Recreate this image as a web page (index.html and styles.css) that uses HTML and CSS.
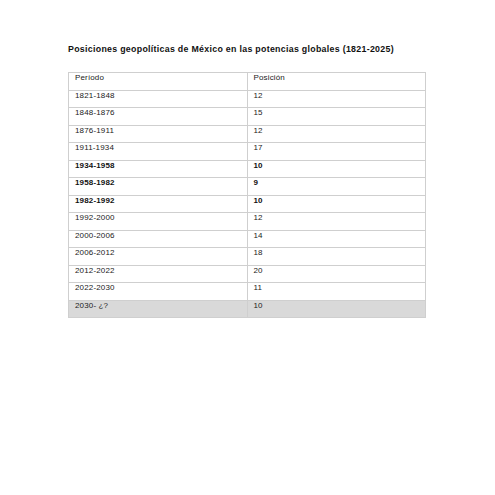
FILE: index.html
```html
<!DOCTYPE html>
<html lang="es">
<head>
<meta charset="utf-8">
<link rel="stylesheet" href="styles.css">
</head>
<body>
<div class="page">
  <h1 class="title">Posiciones geopolíticas de México en las potencias globales (1821-2025)</h1>
  <table class="data">
    <tr><td>Período</td><td>Posición</td></tr>
    <tr><td>1821-1848</td><td>12</td></tr>
    <tr><td>1848-1876</td><td>15</td></tr>
    <tr><td>1876-1911</td><td>12</td></tr>
    <tr><td>1911-1934</td><td>17</td></tr>
    <tr class="bold"><td>1934-1958</td><td>10</td></tr>
    <tr class="bold"><td>1958-1982</td><td>9</td></tr>
    <tr class="bold"><td>1982-1992</td><td>10</td></tr>
    <tr><td>1992-2000</td><td>12</td></tr>
    <tr><td>2000-2006</td><td>14</td></tr>
    <tr><td>2006-2012</td><td>18</td></tr>
    <tr><td>2012-2022</td><td>20</td></tr>
    <tr><td>2022-2030</td><td>11</td></tr>
    <tr class="shade"><td>2030- ¿?</td><td>10</td></tr>
  </table>
</div>
</body>
</html>
```

FILE: styles.css
```css
html, body {
  margin: 0;
  padding: 0;
  background: #ffffff;
}
.page {
  padding: 43px 0 0 68px;
  font-family: "Liberation Sans", Arial, sans-serif;
  color: #1a1a1a;
}
.title {
  margin: 0;
  font-size: 8.8px;
  font-weight: bold;
  letter-spacing: 0.3px;
  line-height: 12px;
  color: #111;
}
.data {
  margin-top: 17px;
  border-collapse: collapse;
  width: 358px;
  table-layout: fixed;
  font-size: 8px;
}
.data td {
  border: 1px solid #cfcfcf;
  height: 16.5px;
  padding: 0 0 0 6px;
  vertical-align: top;
  line-height: 10px;
  letter-spacing: 0.15px;
  color: #222;
}
.data tr.bold td {
  font-weight: bold;
  color: #111;
}
.data tr.shade td {
  background: #d9d9d9;
}
```
